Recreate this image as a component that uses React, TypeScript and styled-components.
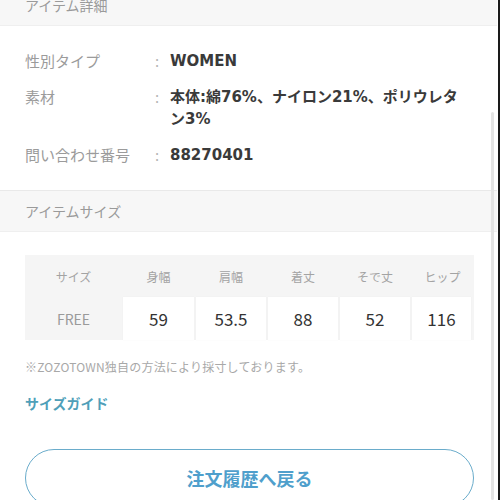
import React from "react";
import styled, { createGlobalStyle } from "styled-components";

const Global = createGlobalStyle`
  html, body { margin: 0; padding: 0; background: #fff; overflow: hidden; }
  body { font-family: "Noto Sans CJK JP", "Noto Sans", sans-serif; }
  * { box-sizing: border-box; }
`;

const Frame = styled.div`
  position: relative;
  width: 500px;
  height: 500px;
  overflow: hidden;
  border-right: 2px solid #1a1a1a;
`;

const Page = styled.div`
  margin-top: -16px;
  width: 497px;
`;

const SectionHeader = styled.div<{ $top?: boolean }>`
  height: 42px;
  display: flex;
  align-items: center;
  padding-left: 25px;
  background: #f7f7f7;
  color: #9a9a9a;
  font-size: 14px;
  border-top: ${(p) => (p.$top ? "none" : "1px solid #e9e9e9")};
  border-bottom: 1px solid #efefef;
`;

const Details = styled.div`
  padding: 24px 25px 24px;
  display: flex;
  flex-direction: column;
  gap: 14px;
`;

const Row = styled.div`
  display: flex;
  align-items: flex-start;
  font-size: 15px;
  line-height: 22px;
`;

const Label = styled.div`
  width: 130px;
  flex-shrink: 0;
  color: #9b9b9b;
`;

const Colon = styled.div`
  width: 15px;
  flex-shrink: 0;
  color: #b5b5b5;
`;

const Value = styled.div`
  flex: 1;
  color: #3a3a3a;
  font-family: "DejaVu Sans", "Noto Sans CJK JP", sans-serif;
  font-weight: 700;
  padding-right: 2px;
`;

const SizeBody = styled.div`
  padding: 23px 25px 0;
`;

const Grid = styled.div`
  display: grid;
  grid-template-columns: 97px 73px 72px 72px 72px 63px;
  grid-template-rows: 42px 43px;
  background: #f5f5f5;
  width: 449px;
`;

const Head = styled.div`
  display: flex;
  align-items: center;
  justify-content: center;
  font-size: 12px;
  color: #a3a3a3;
`;

const RowHead = styled.div`
  display: flex;
  align-items: center;
  justify-content: center;
  font-size: 14px;
  color: #9a9a9a;
`;

const Cell = styled.div<{ $last?: boolean }>`
  display: flex;
  align-items: center;
  justify-content: center;
  background: #fff;
  font-size: 17px;
  color: #333;
  margin: 0 ${(p) => (p.$last ? "3px" : "1px")} 0 1px;
  box-shadow: 0 0 1px rgba(0, 0, 0, 0.06);
`;

const Note = styled.div`
  margin-top: 18px;
  font-size: 12px;
  line-height: 18px;
  color: #a8a8a8;
  letter-spacing: 0.2px;
`;

const Link = styled.a`
  display: block;
  margin-top: 17px;
  font-size: 14px;
  line-height: 20px;
  font-weight: 700;
  color: #4f9fb9;
  text-decoration: none;
`;

const Button = styled.button`
  display: flex;
  align-items: center;
  justify-content: center;
  margin-top: 36px;
  width: 449px;
  height: 58px;
  border-radius: 29px;
  border: 1px solid #6aaccb;
  background: #fff;
  font-family: inherit;
  font-size: 18px;
  font-weight: 700;
  color: #4f9fcc;
  padding: 0;
`;

const Scroll = styled.div`
  position: absolute;
  left: 491px;
  top: 112px;
  width: 3px;
  bottom: 0;
  background: #e4e4e4;
  border-radius: 2px;
`;

const heads = ["サイズ", "身幅", "肩幅", "着丈", "そで丈", "ヒップ"];
const vals = ["59", "53.5", "88", "52", "116"];

export default function App() {
  return (
    <Frame>
      <Global />
      <Page>
        <SectionHeader $top>アイテム詳細</SectionHeader>
        <Details>
          <Row>
            <Label>性別タイプ</Label>
            <Colon>:</Colon>
            <Value>WOMEN</Value>
          </Row>
          <Row>
            <Label>素材</Label>
            <Colon>:</Colon>
            <Value>本体:綿76%、ナイロン21%、ポリウレタン3%</Value>
          </Row>
          <Row>
            <Label>問い合わせ番号</Label>
            <Colon>:</Colon>
            <Value>88270401</Value>
          </Row>
        </Details>
        <SectionHeader>アイテムサイズ</SectionHeader>
        <SizeBody>
          <Grid>
            {heads.map((h) => (
              <Head key={h}>{h}</Head>
            ))}
            <RowHead>FREE</RowHead>
            {vals.map((v, i) => (
              <Cell key={v} $last={i === vals.length - 1}>
                {v}
              </Cell>
            ))}
          </Grid>
          <Note>※ZOZOTOWN独自の方法により採寸しております。</Note>
          <Link href="#">サイズガイド</Link>
          <Button>注文履歴へ戻る</Button>
        </SizeBody>
      </Page>
      <Scroll />
    </Frame>
  );
}
